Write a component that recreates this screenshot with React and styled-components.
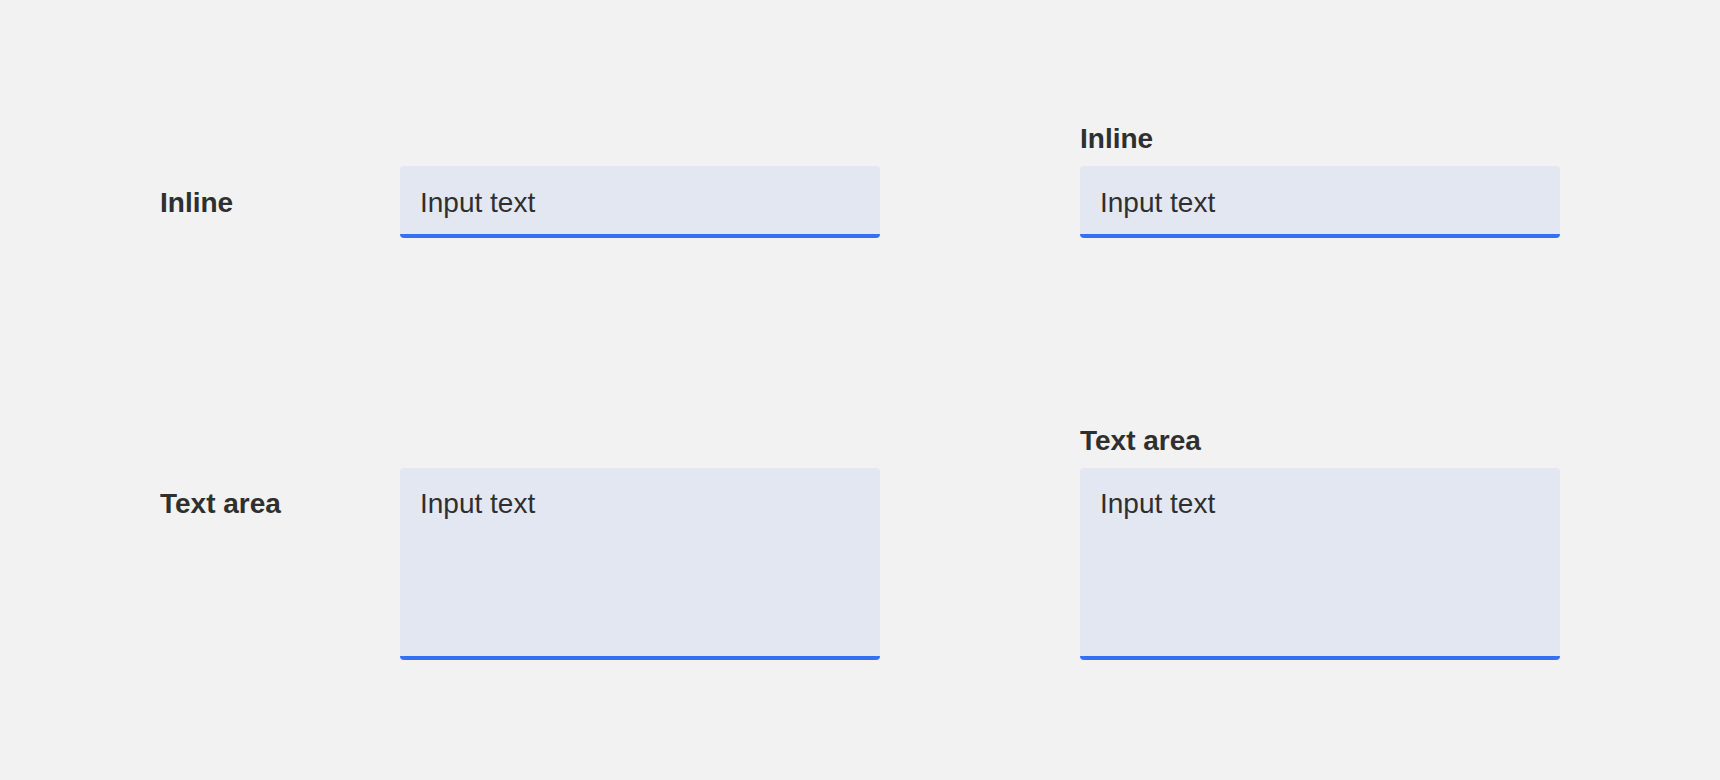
import styled, { createGlobalStyle } from 'styled-components'

const GlobalStyle = createGlobalStyle`
  html, body {
    margin: 0;
    padding: 0;
    background: #f2f2f2;
  }
  body {
    font-family: 'Liberation Sans', Arial, Helvetica, sans-serif;
    color: #2f2f2f;
  }
`

const Page = styled.div`
  width: 1720px;
  height: 780px;
  box-sizing: border-box;
  padding: 122px 0 0 160px;
  display: grid;
  grid-template-columns: 720px 480px;
  column-gap: 200px;
  row-gap: 186px;
  align-items: end;
  align-content: start;
`

const InlineField = styled.div`
  display: flex;
  align-items: flex-start;
`

const SideLabel = styled.label`
  width: 240px;
  flex-shrink: 0;
  padding-top: ${(p) => p.$top}px;
  font-size: 28px;
  line-height: 32px;
  font-weight: 700;
`

const StackField = styled.div`
  display: flex;
  flex-direction: column;
`

const TopLabel = styled.label`
  font-size: 28px;
  line-height: 32px;
  font-weight: 700;
  padding-top: 1px;
  margin-bottom: 11px;
`

const fieldBase = `
  width: 480px;
  box-sizing: border-box;
  margin: 0;
  border: none;
  border-bottom: 4px solid #3370f6;
  border-radius: 4px;
  background: #e3e7f2;
  color: #2f2f2f;
  font-family: 'Liberation Sans', Arial, Helvetica, sans-serif;
  font-size: 28px;
  line-height: 32px;
  outline: none;
  padding-left: 20px;
  padding-right: 20px;
`

const TextInput = styled.input`
  ${fieldBase}
  height: 72px;
  padding-top: 21px;
  padding-bottom: 15px;
`

const TextArea = styled.textarea`
  ${fieldBase}
  display: block;
  height: 192px;
  padding-top: 20px;
  padding-bottom: 20px;
  resize: none;
`

const App = () => {
  return (
    <>
      <GlobalStyle />
      <Page>
        <InlineField>
          <SideLabel $top={21}>Inline</SideLabel>
          <TextInput defaultValue='Input text' readOnly />
        </InlineField>
        <StackField>
          <TopLabel>Inline</TopLabel>
          <TextInput defaultValue='Input text' readOnly />
        </StackField>

        <InlineField>
          <SideLabel $top={20}>Text area</SideLabel>
          <TextArea defaultValue='Input text' readOnly />
        </InlineField>
        <StackField>
          <TopLabel>Text area</TopLabel>
          <TextArea defaultValue='Input text' readOnly />
        </StackField>
      </Page>
    </>
  )
}

export default App
